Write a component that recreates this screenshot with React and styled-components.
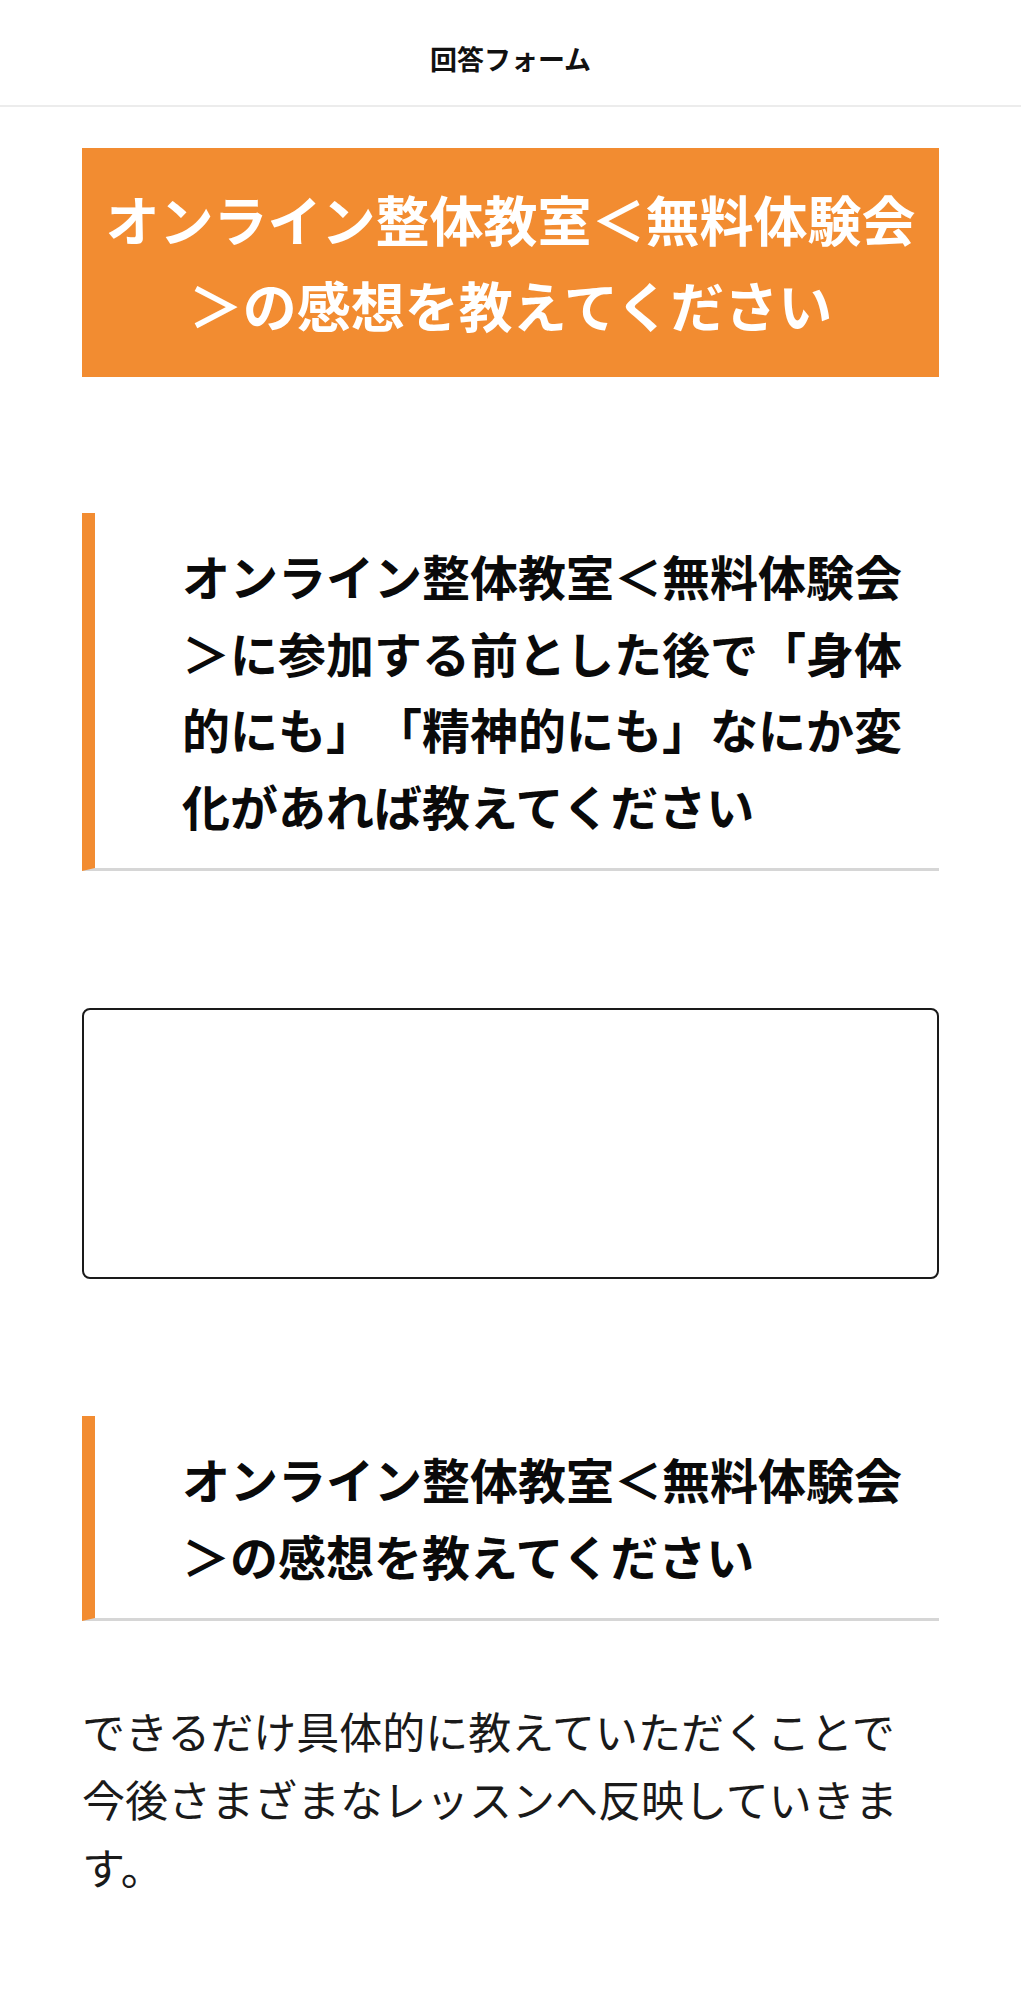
import React from 'react';
import styled, { createGlobalStyle } from 'styled-components';

const GlobalStyle = createGlobalStyle`
  * {
    box-sizing: border-box;
  }

  body {
    margin: 0;
    background: #fff;
    color: #111;
    font-family: "Noto Sans CJK JP", "Noto Sans", sans-serif;
    text-spacing-trim: space-all;
  }
`;

const Header = styled.header`
  height: 107px;
  padding-top: 39px;
  border-bottom: 2px solid #ececec;
  text-align: center;
  font-size: 27px;
  font-weight: 700;
  line-height: 40px;
  color: #111;
`;

const Main = styled.main`
  display: flex;
  flex-direction: column;
  padding: 41px 82px 120px;
`;

const Banner = styled.h1`
  margin: 0;
  padding: 28px 20px;
  background: #f28c31;
  color: #fff;
  font-size: 54px;
  font-weight: 700;
  line-height: 1.6;
  text-align: center;
`;

const Question = styled.h2`
  margin: ${({ gap }) => gap}px 0 0;
  padding: 24px 10px 24px 87px;
  border-left: 13px solid #f28c31;
  border-bottom: 3px solid #d6d6d6;
  font-size: 48px;
  font-weight: 700;
  line-height: 1.6;
  color: #0a0a0a;
`;

const Answer = styled.textarea`
  display: block;
  width: 100%;
  height: 271px;
  margin-top: 137px;
  padding: 16px;
  border: 2px solid #1a1a1a;
  border-radius: 8px;
  background: #fff;
  resize: none;
  font-family: inherit;
  font-size: 40px;
  outline: none;
`;

const Note = styled.p`
  margin: 75px 0 0;
  padding-right: 24px;
  font-size: 43px;
  font-weight: 400;
  line-height: 68px;
  color: #1a1a1a;
`;

export default function App() {
  return (
    <>
      <GlobalStyle />
      <Header>回答フォーム</Header>
      <Main>
        <Banner>オンライン整体教室＜無料体験会＞の感想を教えてください</Banner>
        <Question gap={136}>
          オンライン整体教室＜無料体験会＞に参加する前とした後で「身体的にも」「精神的にも」なにか変化があれば教えてください
        </Question>
        <Answer aria-label="回答" />
        <Question gap={137}>オンライン整体教室＜無料体験会＞の感想を教えてください</Question>
        <Note>できるだけ具体的に教えていただくことで今後さまざまなレッスンへ反映していきます。</Note>
      </Main>
    </>
  );
}
